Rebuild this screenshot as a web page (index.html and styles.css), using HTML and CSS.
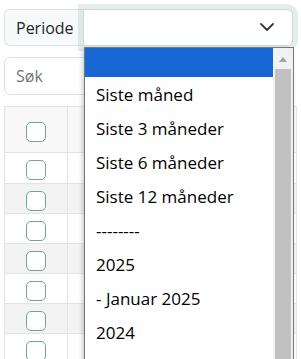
FILE: index.html
```html
<!DOCTYPE html>
<html lang="no">
<head>
    <meta charset="UTF-8">
    <meta name="viewport" content="width=device-width, initial-scale=1.0">
    <title>Periode</title>
    <link rel="stylesheet" href="styles.css">
</head>
<body>
    <div class="page">
        <div class="filter-group">
            <span class="filter-label">Periode</span>
            <div class="filter-select">
                <svg class="chevron" viewBox="0 0 14 8" width="14" height="8">
                    <polyline points="1,1 7,7 13,1" fill="none" stroke="#343a40" stroke-width="1.8" stroke-linecap="round" stroke-linejoin="round"/>
                </svg>
            </div>

            <div class="select-popup">
                <ul class="popup-options">
                    <li class="option selected"></li>
                    <li class="option">Siste måned</li>
                    <li class="option">Siste 3 måneder</li>
                    <li class="option">Siste 6 måneder</li>
                    <li class="option">Siste 12 måneder</li>
                    <li class="option">--------</li>
                    <li class="option">2025</li>
                    <li class="option">- Januar 2025</li>
                    <li class="option">2024</li>
                </ul>
                <div class="popup-scrollbar">
                    <div class="scroll-arrow"></div>
                    <div class="scroll-thumb"></div>
                </div>
            </div>
        </div>

        <input class="search" type="text" placeholder="Søk">

        <table class="list-table">
            <thead>
                <tr>
                    <th class="check-cell"><span class="check"></span></th>
                    <th></th>
                </tr>
            </thead>
            <tbody>
                <tr><td class="check-cell"><span class="check"></span></td><td></td></tr>
                <tr><td class="check-cell"><span class="check"></span></td><td></td></tr>
                <tr><td class="check-cell"><span class="check"></span></td><td></td></tr>
                <tr><td class="check-cell"><span class="check"></span></td><td></td></tr>
                <tr><td class="check-cell"><span class="check"></span></td><td></td></tr>
                <tr><td class="check-cell"><span class="check"></span></td><td></td></tr>
                <tr><td class="check-cell"><span class="check"></span></td><td></td></tr>
            </tbody>
        </table>
    </div>
</body>
</html>
```

FILE: styles.css
```css
* {
    margin: 0;
    padding: 0;
    box-sizing: border-box;
}

html, body {
    width: 100%;
    height: 100%;
    overflow: hidden;
}

body {
    background: #fff;
    font-family: 'Open Sans', 'Noto Sans', sans-serif;
    font-size: 16px;
    color: #212529;
}

.page {
    padding: 9px 4px 0 4px;
}

/* periode filter */

.filter-group {
    position: relative;
    display: flex;
    width: 289px;
    height: 37px;
}

.filter-label {
    display: flex;
    align-items: center;
    padding: 0 11px 0 11px;
    width: 79px;
    background: #f8f9fa;
    border: 1px solid #dee2e6;
    border-right: none;
    border-radius: 6px 0 0 6px;
    color: #212529;
    font-size: 16px;
}

.filter-select {
    flex: 1;
    display: flex;
    align-items: center;
    justify-content: flex-end;
    padding-right: 18px;
    background: #fff;
    border: 1px solid #c4dcd3;
    border-radius: 0 6px 6px 0;
    box-shadow: 0 0 0 5px rgba(142, 186, 170, 0.25);
}

.chevron {
    margin-top: -2px;
}

/* open native list */

.select-popup {
    position: absolute;
    top: 38px;
    left: 80px;
    width: 210px;
    height: 330px;
    display: flex;
    background: #fff;
    border: 1px solid #767676;
    border-bottom: none;
    box-shadow: -2px 2px 4px rgba(0, 0, 0, 0.18);
    z-index: 10;
}

.popup-options {
    flex: 1;
    list-style: none;
}

.option {
    height: 34px;
    padding: 1px 0 0 11px;
    display: flex;
    align-items: center;
    color: #000;
    font-size: 17px;
    white-space: nowrap;
}

.option.selected {
    height: 29px;
    background: #1967d2;
}

.popup-scrollbar {
    width: 20px;
    background: #f1f1f1;
    display: flex;
    flex-direction: column;
    align-items: center;
}

.scroll-arrow {
    margin-top: 9px;
    width: 0;
    height: 0;
    border-left: 4px solid transparent;
    border-right: 4px solid transparent;
    border-bottom: 5px solid #a3a3a3;
}

.scroll-thumb {
    margin-top: 7px;
    width: 16px;
    flex: 1;
    background: #c1c1c1;
}

/* search */

.search {
    display: block;
    margin-top: 11px;
    width: 289px;
    height: 38px;
    padding: 0 11px;
    border: 1px solid #dee2e6;
    border-radius: 6px;
    font-family: 'Open Sans', 'Noto Sans', sans-serif;
    font-size: 16px;
    color: #212529;
    outline: none;
}

.search::placeholder {
    color: #6c757d;
}

/* table */

.list-table {
    margin-top: 11px;
    width: 293px;
    border-collapse: collapse;
    border: 1px solid #e3e3e3;
}

.list-table th,
.list-table td {
    border: 1px solid #e3e3e3;
    height: 30px;
    text-align: left;
    vertical-align: middle;
}

.list-table thead th {
    height: 46px;
    background: #f8f8f8;
}

.list-table tbody tr:nth-child(even) td {
    background: #f3f3f3;
}

.list-table tbody tr:first-child td {
    height: 31px;
}

.check-cell {
    width: 63px;
    text-align: center !important;
}

.check {
    display: inline-block;
    width: 20px;
    height: 20px;
    margin-top: 3px;
    border: 1px solid #6da792;
    border-radius: 5px;
    background: #fff;
    vertical-align: middle;
}
```
